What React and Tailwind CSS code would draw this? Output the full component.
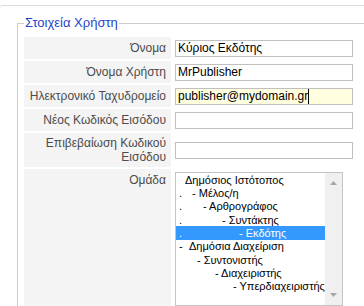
import React from 'react';

const fields = [
  { label: 'Όνομα', value: 'Κύριος Εκδότης' },
  { label: 'Όνομα Χρήστη', value: 'MrPublisher' },
  { label: 'Ηλεκτρονικό Ταχυδρομείο', value: 'publisher@mydomain.gr', focused: true },
  { label: 'Νέος Κωδικός Εισόδου', value: '' },
  { label: 'Επιβεβαίωση Κωδικού Εισόδου', value: '', tall: true },
];

// lead: what sits in the first little column, indent: offset of the text after it
const groups = [
  { lead: '', indent: 'ml-0', text: 'Δημόσιος Ιστότοπος' },
  { lead: '.', indent: 'ml-[7px]', text: '- Μέλος/η' },
  { lead: '.', indent: 'ml-[18px]', text: '- Αρθρογράφος' },
  { lead: '.', indent: 'ml-[37px]', text: '- Συντάκτης' },
  { lead: '.', indent: 'ml-[54px]', text: '- Εκδότης', selected: true },
  { lead: '-', indent: 'ml-[4px]', text: 'Δημόσια Διαχείριση' },
  { lead: '', indent: 'ml-[12px]', text: '- Συντονιστής' },
  { lead: '', indent: 'ml-[30px]', text: '- Διαχειριστής' },
  { lead: '', indent: 'ml-[48px]', text: '- Υπερδιαχειριστής' },
];

function TextField({ value, focused }) {
  if (focused) {
    return (
      <div className="flex items-center w-[178px] h-[17px] border border-[#c0c0c0] bg-[#ffffe0] px-[2px] text-[12px] text-black">
        <span>{value}</span>
        <span className="w-px h-[15px] bg-black" />
      </div>
    );
  }
  return (
    <input
      readOnly
      value={value}
      className="w-[178px] h-[17px] border border-[#c0c0c0] bg-white px-[2px] text-[12px] text-black outline-none"
    />
  );
}

function GroupList() {
  return (
    <div className="flex w-[168px] h-[134px] mt-[3px] border border-[#c4c4c4] bg-white">
      <div className="flex-1 text-[11px] text-black">
        {groups.map((g) => (
          <div
            key={g.text}
            className={`flex items-center h-[13.33px] whitespace-pre ${g.selected ? 'bg-[#3399ff] text-white' : ''}`}
          >
            <span className="w-[9px] pl-[3px]">{g.lead}</span>
            <span className={g.indent}>{g.text}</span>
          </div>
        ))}
      </div>
      {/* fake scrollbar */}
      <div className="flex flex-col items-center justify-between w-[17px] bg-[#f0f0f0] py-[8px]">
        <svg width="7" height="4" viewBox="0 0 7 4">
          <path d="M3.5 0 L7 4 L0 4 Z" fill="#a6a6a6" />
        </svg>
        <svg width="7" height="4" viewBox="0 0 7 4">
          <path d="M0 0 L7 0 L3.5 4 Z" fill="#a6a6a6" />
        </svg>
      </div>
    </div>
  );
}

export default function App() {
  return (
    <div className="w-[364px] h-[306px] overflow-hidden bg-white font-['Liberation_Sans',Arial,sans-serif]">
      <div className="mt-[5px] border-t border-[#dcdcdc] rounded-tl-[3px] pt-[9px] pl-[17px]">
        <fieldset className="w-[420px] border border-[#cccccc] px-[6px] pt-[6px] pb-[10px]">
          <legend className="px-[1px] text-[13px] leading-[16px] text-[#1e44c8]">Στοιχεία Χρήστη</legend>

          <div className="grid grid-cols-[147px_auto] gap-x-[4px] gap-y-[2px] text-[12px] leading-[14px]">
            {fields.map((f) => (
              <React.Fragment key={f.label}>
                <div
                  className={`flex items-center justify-end text-right bg-[#f4f4f4] pl-[4px] pr-[5px] text-[#4b4b4b] ${f.tall ? 'h-[34px]' : 'h-[22px]'}`}
                >
                  {f.label}
                </div>
                <div className="flex items-center">
                  <TextField value={f.value} focused={f.focused} />
                </div>
              </React.Fragment>
            ))}

            <div className="bg-[#f4f4f4] pt-[4px] pr-[5px] text-right text-[#4b4b4b]">Ομάδα</div>
            <div>
              <GroupList />
            </div>
          </div>
        </fieldset>
      </div>
    </div>
  );
}
